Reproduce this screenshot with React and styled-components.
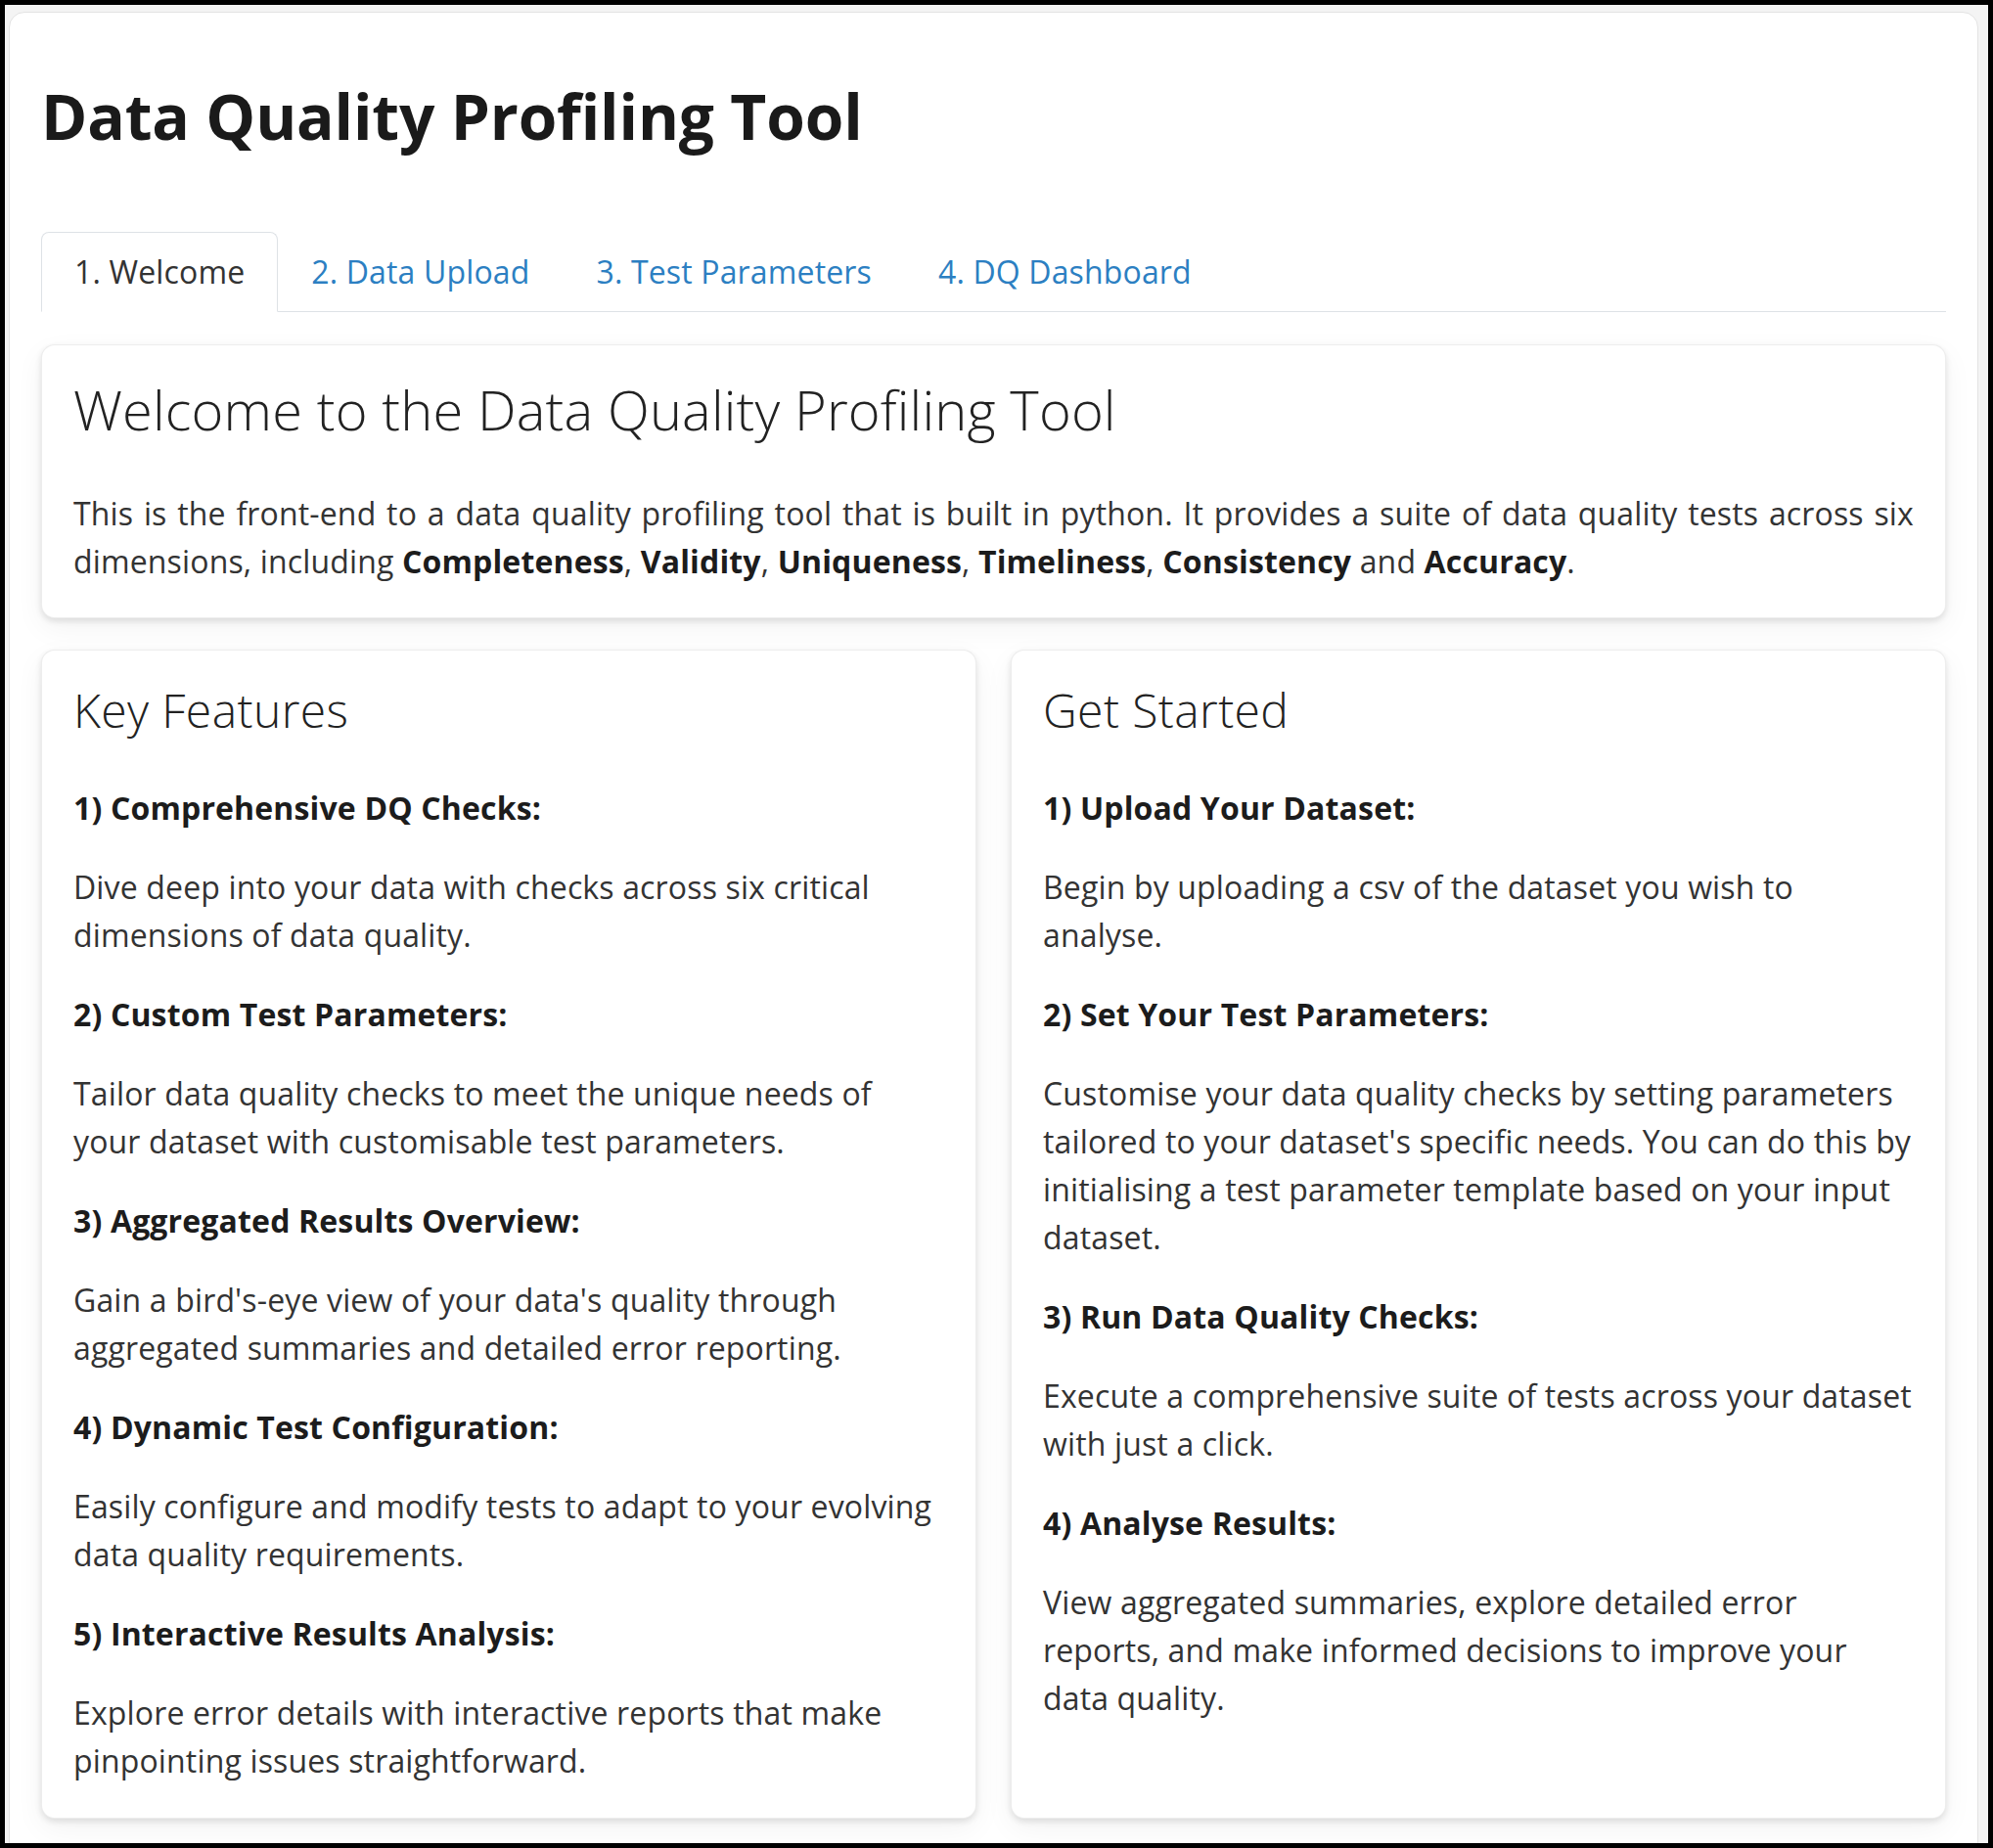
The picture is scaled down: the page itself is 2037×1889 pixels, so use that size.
import React, { useState } from 'react'
import styled, { createGlobalStyle } from 'styled-components'

const GlobalStyle = createGlobalStyle`
  html, body {
    margin: 0;
    padding: 0;
    background: #000;
  }
  * {
    box-sizing: border-box;
  }
`

const Frame = styled.div`
  height: 100vh;
  border: 5px solid #000;
  background: #f4f4f4;
  overflow: hidden;
  padding: 7px 10px 0 4px;
  font-family: "Open Sans", "Liberation Sans", sans-serif;
  color: #333;
`

const Panel = styled.div`
  background: #fff;
  border: 1px solid #e3e3e3;
  border-radius: 16px;
  padding: 68px 32px 80px;
  min-height: 100%;
`

const Title = styled.h2`
  margin: 0 0 79px;
  font-size: 64px;
  font-weight: 700;
  line-height: 1.2;
  letter-spacing: -0.15px;
  color: #1a1a1a;
`

const TabBar = styled.ul`
  display: flex;
  list-style: none;
  margin: 0 0 33px;
  padding: 0;
  border-bottom: 1px solid #dee2e6;
`

const Tab = styled.li`
  margin-bottom: -1px;
  padding: 16px 33px;
  font-size: 32px;
  line-height: 1.5;
  letter-spacing: 0.15px;
  cursor: pointer;
  border: 1px solid ${p => (p.active ? '#dee2e6' : 'transparent')};
  border-bottom-color: ${p => (p.active ? '#fff' : 'transparent')};
  border-radius: 8px 8px 0 0;
  background: ${p => (p.active ? '#fff' : 'transparent')};
  color: ${p => (p.active ? '#333' : '#2c7fc2')};
`

const Card = styled.div`
  background: #fff;
  border: 1px solid rgba(0, 0, 0, 0.07);
  border-radius: 14px;
  padding: 32px 32px ${p => p.bottom || 32}px;
  box-shadow: 0 3px 6px rgba(0, 0, 0, 0.11), 0 10px 30px rgba(0, 0, 0, 0.05);
`

const Columns = styled.div`
  display: grid;
  grid-template-columns: 1fr 1fr;
  gap: 35px;
  margin-top: 32px;
`

const CardTitle = styled.h3`
  margin: 0 0 ${p => p.gap || 47}px;
  font-size: ${p => p.size || 56}px;
  font-weight: 300;
  line-height: 1.2;
  letter-spacing: ${p => (p.size ? 0.4 : 0.15)}px;
  color: #222;
`

const Text = styled.p`
  margin: 0 0 32px;
  font-size: 32px;
  line-height: 49px;
  letter-spacing: 0.15px;
  color: #333;
  text-align: ${p => (p.justify ? 'justify' : 'left')};

  &:last-child {
    margin-bottom: 0;
  }

  strong {
    font-weight: 700;
    color: #1c1c1c;
  }
`

const tabs = ['1. Welcome', '2. Data Upload', '3. Test Parameters', '4. DQ Dashboard']

const features = [
  ['1) Comprehensive DQ Checks:', 'Dive deep into your data with checks across six critical dimensions of data quality.'],
  ['2) Custom Test Parameters:', 'Tailor data quality checks to meet the unique needs of your dataset with customisable test parameters.'],
  ['3) Aggregated Results Overview:', "Gain a bird's-eye view of your data's quality through aggregated summaries and detailed error reporting."],
  ['4) Dynamic Test Configuration:', 'Easily configure and modify tests to adapt to your evolving data quality requirements.'],
  ['5) Interactive Results Analysis:', 'Explore error details with interactive reports that make pinpointing issues straightforward.'],
]

const steps = [
  ['1) Upload Your Dataset:', 'Begin by uploading a csv of the dataset you wish to analyse.'],
  ['2) Set Your Test Parameters:', "Customise your data quality checks by setting parameters tailored to your dataset's specific needs. You can do this by initialising a test parameter template based on your input dataset."],
  ['3) Run Data Quality Checks:', 'Execute a comprehensive suite of tests across your dataset with just a click.'],
  ['4) Analyse Results:', 'View aggregated summaries, explore detailed error reports, and make informed decisions to improve your data quality.'],
]

function ListCard({ title, items }) {
  return (
    <Card bottom={34}>
      <CardTitle size={48} gap={46}>{title}</CardTitle>
      {items.map(([head, body]) => (
        <React.Fragment key={head}>
          <Text><strong>{head}</strong></Text>
          <Text>{body}</Text>
        </React.Fragment>
      ))}
    </Card>
  )
}

export default function App() {
  const [active, setActive] = useState(0)

  return (
    <Frame>
      <GlobalStyle />
      <Panel>
        <Title>Data Quality Profiling Tool</Title>
        <TabBar>
          {tabs.map((t, i) => (
            <Tab key={t} active={i === active} onClick={() => setActive(i)}>{t}</Tab>
          ))}
        </TabBar>
        <Card bottom={33}>
          <CardTitle gap={48}>Welcome to the Data Quality Profiling Tool</CardTitle>
          <Text justify>
            This is the front-end to a data quality profiling tool that is built in python. It provides a suite of data
            quality tests across six dimensions, including <strong>Completeness</strong>, <strong>Validity</strong>,{' '}
            <strong>Uniqueness</strong>, <strong>Timeliness</strong>, <strong>Consistency</strong> and{' '}
            <strong>Accuracy</strong>.
          </Text>
        </Card>
        <Columns>
          <ListCard title="Key Features" items={features} />
          <ListCard title="Get Started" items={steps} />
        </Columns>
      </Panel>
    </Frame>
  )
}
